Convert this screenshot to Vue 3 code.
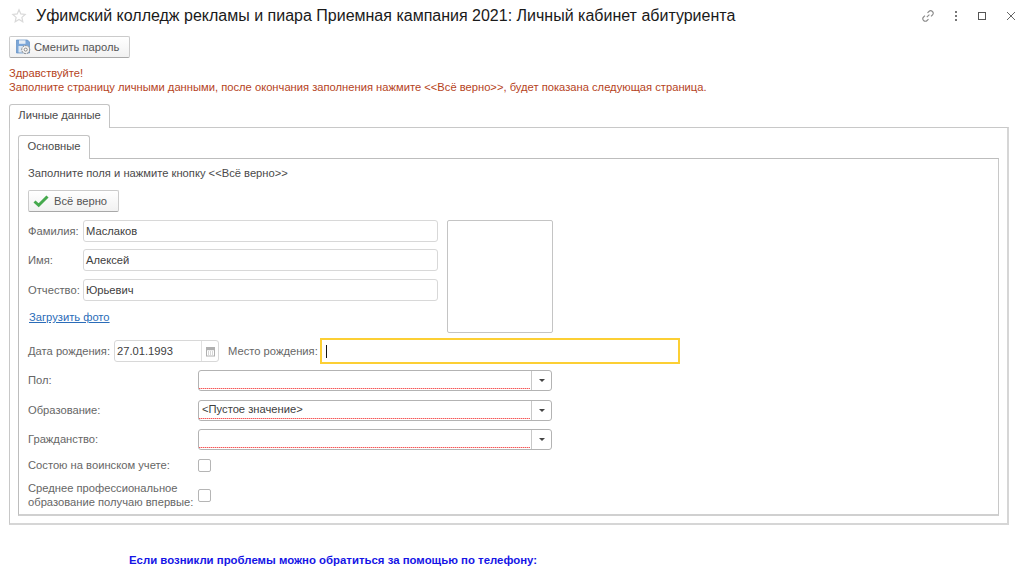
<script setup>
const selects = [
  { label: 'Пол:', value: '' },
  { label: 'Образование:', value: '<Пустое значение>' },
  { label: 'Гражданство:', value: '' }
]
const names = [
  { label: 'Фамилия:', value: 'Маслаков' },
  { label: 'Имя:', value: 'Алексей' },
  { label: 'Отчество:', value: 'Юрьевич' }
]
</script>

<template>
  <div class="page">
    <header class="head">
      <svg class="star" width="16" height="16" viewBox="0 0 16 16"><path d="M8 1.800l1.800 4.100 4.400.5-3.300 3 .9 4.400L8 11.500l-3.800 2.300.9-4.400-3.300-3 4.400-.5z" fill="#fff" stroke="#d9d9d9" stroke-width="1.200"/></svg>
      <h1 class="title">Уфимский колледж рекламы и пиара Приемная кампания 2021: Личный кабинет абитуриента</h1>
      <div class="wintools">
        <svg width="14" height="14" viewBox="0 0 14 14" fill="none" stroke="#8c8c8c" stroke-width="1.1"><path d="M5.800 8.200l2.600-2.600M6.500 3.900l1.400-1.400a2.400 2.400 0 0 1 3.500 3.500L10 7.400M7.500 10.100l-1.400 1.400a2.400 2.400 0 0 1-3.500-3.500L4 6.600"/></svg>
        <svg width="4" height="12" viewBox="0 0 4 12" fill="#777"><rect x="1" y="1" width="2" height="2"/><rect x="1" y="5" width="2" height="2"/><rect x="1" y="9" width="2" height="2"/></svg>
        <svg width="10" height="10" viewBox="0 0 10 10" fill="none" stroke="#555"><rect x="1.500" y="1.500" width="7" height="7"/></svg>
        <svg width="10" height="10" viewBox="0 0 10 10" fill="none" stroke="#666" stroke-width="1"><path d="M1 1l8 8M9 1l-8 8"/></svg>
      </div>
    </header>

    <button class="btn btn-pass">
      <svg width="16" height="16" viewBox="0 0 16 16"><path d="M.5 1h11l2 2v11H.5z" fill="#7ba6d8" stroke="#5f8cc2" stroke-width=".7"/><rect x="3" y="1.300" width="6.500" height="3.500" fill="#e4ecf5"/><rect x="2.500" y="7" width="6" height="6.500" fill="#dbe7f4"/><circle cx="9.700" cy="10.600" r="4" fill="#f2f2f2" stroke="#808080" stroke-dasharray="2 .9"/><circle cx="9.700" cy="10.600" r="1.500" fill="#fff" stroke="#808080" stroke-width=".9"/></svg>
      <span>Сменить пароль</span>
    </button>

    <div class="msg">Здравствуйте!<br>Заполните страницу личными данными, после окончания заполнения нажмите &lt;&lt;Всё верно&gt;&gt;, будет показана следующая страница.</div>

    <div class="tabbar"><div class="tab tab-outer">Личные данные</div></div>
    <section class="panel outer">
      <div class="tabbar"><div class="tab tab-inner">Основные</div></div>
      <div class="panel inner">
        <p class="hint">Заполните поля и нажмите кнопку &lt;&lt;Всё верно&gt;&gt;</p>
        <button class="btn btn-ok">
          <svg width="16" height="14" viewBox="0 0 16 14"><path d="M1.500 7.500l4.200 3.800L14.500 2.500" fill="none" stroke="#45a94d" stroke-width="3"/></svg>
          <span>Всё верно</span>
        </button>

        <div class="identity">
          <div class="names">
            <div v-for="n in names" :key="n.label" class="name-row">
              <label class="lbl name-lbl">{{ n.label }}</label>
              <div class="input name-input">{{ n.value }}</div>
            </div>
            <a class="link">Загрузить фото</a>
          </div>
          <div class="photo"></div>
        </div>

        <div class="birth">
          <label class="lbl">Дата рождения:</label>
          <div class="input date"><span class="date-val">27.01.1993</span><span class="cal">
            <svg width="11" height="11" viewBox="0 0 11 11" fill="none" stroke="#b0b0b0"><rect x="1.500" y="1.500" width="8" height="8.500"/><path d="M1.500 3h8" stroke-width="2.500"/><path d="M3 6h5M3 8h5" stroke-width="1" stroke-dasharray="1 1"/></svg>
          </span></div>
          <label class="lbl place-lbl">Место рождения:</label>
          <div class="focus"><i class="caret"></i></div>
        </div>

        <div class="sel-group">
          <div v-for="s in selects" :key="s.label" class="sel-row">
            <label class="lbl col-lbl raised">{{ s.label }}</label>
            <div class="select">
              <div class="sel-val">{{ s.value }}</div>
              <span class="drop"><i class="tri"></i></span>
            </div>
          </div>
        </div>

        <div class="check-row first">
          <label class="lbl col-lbl raised">Состою на воинском учете:</label>
          <span class="check"></span>
        </div>
        <div class="check-row second">
          <label class="lbl col-lbl two">Среднее профессиональное образование получаю впервые:</label>
          <span class="check"></span>
        </div>
      </div>
    </section>

    <p class="foot">Если возникли проблемы можно обратиться за помощью по телефону:</p>
  </div>
</template>

<style>
html, body { margin: 0; background: #fff; overflow: hidden; }
</style>

<style scoped>
.page {
  width: 1024px;
  height: 577px;
  overflow: hidden;
  box-sizing: border-box;
  padding: 0 15px 0 9px;
  font-family: "Liberation Sans", Arial, sans-serif;
  font-size: 11.2px;
  color: #4a4a4a;
  background: #fff;
}
.head {
  height: 36px;
  display: flex;
  align-items: center;
  margin-left: 2px;
  padding-bottom: 4px;
  box-sizing: border-box;
}
.star { flex: none; }
.title {
  margin: 0 0 0 9px;
  font-size: 16px;
  font-weight: 400;
  color: #1a1a1a;
  white-space: nowrap;
}
.wintools {
  margin-left: auto;
  margin-right: -7px;
  display: flex;
  align-items: center;
  gap: 19px;
}
.btn {
  display: flex;
  align-items: center;
  box-sizing: border-box;
  height: 22px;
  padding: 0;
  font: inherit;
  color: #555;
  background: linear-gradient(#fff, #f1f1f1);
  border: 1px solid #cbcbcb;
  border-bottom-color: #a8a8a8;
  border-radius: 2px;
}
.btn-pass { width: 121px; padding-left: 6px; gap: 2px; }
.btn-ok { width: 91px; padding-left: 4px; gap: 5px; }
.msg {
  margin-top: 8px;
  height: 28px;
  line-height: 14px;
  color: #b5431c;
  white-space: nowrap;
}
.tabbar { display: flex; height: 23px; position: relative; z-index: 1; }
.tab {
  box-sizing: border-box;
  height: 24px;
  padding-bottom: 4px;
  border: 1px solid #c4c4c4;
  border-bottom: 0;
  border-radius: 3px 3px 0 0;
  background: #fff;
  display: flex;
  align-items: center;
  justify-content: center;
}
.tab-outer { width: 101px; }
.tab-inner { width: 72px; }
.msg + .tabbar { margin-top: 10px; }
.panel {
  border: 1px solid #c4c4c4;
  box-sizing: border-box;
}
.outer {
  height: 398px;
  padding: 7px 8px 0;
  border-width: 1px 2px 2px 1px;
  border-color: #c8c8c8 #d6d6d6 #d6d6d6 #c8c8c8;
}
.inner {
  height: 358px;
  padding: 0 9px;
  border-width: 1px 1px 2px 1px;
  border-color: #bdbdbd #c8c8c8 #d0d0d0 #bdbdbd;
}
.hint { margin: 8px 0 0; line-height: 13px; }
.btn-ok { margin-top: 10px; }
.identity { display: flex; margin-top: 8px; }
.names { width: 410px; }
.name-row { display: flex; align-items: center; height: 22px; margin-bottom: 7px; }
.name-row:nth-child(2) { margin-bottom: 8px; }
.lbl { color: #666; white-space: nowrap; }
.name-lbl { width: 55px; flex: none; }
.raised { padding-bottom: 2px; }
.input {
  box-sizing: border-box;
  border: 1px solid #d8d8d8;
  border-radius: 3px;
  background: #fff;
  color: #404040;
}
.name-input {
  width: 355px;
  height: 22px;
  line-height: 20px;
  padding-left: 2px;
}
.link {
  display: inline-block;
  margin: 3px 0 0 1px;
  color: #2a6cb8;
  text-decoration: underline;
}
.photo {
  box-sizing: border-box;
  width: 106px;
  height: 113px;
  margin-left: 9px;
  border: 1px solid #c4c4c4;
  border-radius: 2px;
}
.birth {
  display: flex;
  align-items: center;
  height: 26px;
  margin-top: 5px;
}
.birth > .lbl:first-child { width: 86px; flex: none; }
.date { display: flex; width: 105px; height: 22px; align-items: center; }
.date-val { width: 86px; padding-left: 2px; box-sizing: border-box; }
.cal {
  flex: 1;
  height: 100%;
  border-left: 1px solid #e0e0e0;
  display: flex;
  align-items: center;
  justify-content: center;
}
.place-lbl { margin-left: 9px; width: 92px; flex: none; }
.focus {
  box-sizing: border-box;
  width: 360px;
  height: 26px;
  border: 2px solid #fccf34;
  background: #fff;
  display: flex;
  align-items: center;
  padding-left: 4px;
}
.caret { width: 1px; height: 13px; background: #111; display: block; }
.sel-group { margin-top: 6px; }
.sel-row { display: flex; align-items: center; height: 21px; margin-bottom: 9px; }
.sel-row:nth-child(2) { margin-bottom: 8px; }
.col-lbl { width: 170px; flex: none; }
.select {
  display: flex;
  box-sizing: border-box;
  width: 354px;
  height: 21px;
  border: 1px solid #b3b3b3;
  border-radius: 3px;
  background: #fff;
}
.sel-val {
  flex: 1;
  margin: 0 1px 1px 0;
  padding-left: 3px;
  line-height: 17px;
  height: 18px;
  color: #404040;
  background: repeating-linear-gradient(90deg, #f25a5a 0 1px, #ffb5b5 1px 2px) left bottom / 100% 1px no-repeat;
}
.drop {
  width: 19px;
  flex: none;
  border-left: 1px solid #c8c8c8;
  display: flex;
  align-items: center;
  justify-content: center;
}
.tri {
  display: block;
  width: 0;
  height: 0;
  border-left: 3px solid transparent;
  border-right: 3px solid transparent;
  border-top: 3px solid #444;
}
.check-row { display: flex; align-items: center; }
.first { height: 13px; margin-top: 9px; }
.second { height: 26px; margin-top: 10px; }
.two { white-space: normal; line-height: 14px; width: 170px; }
.check {
  box-sizing: border-box;
  width: 13px;
  height: 13px;
  border: 1px solid #b5b5b5;
  border-radius: 2px;
  background: #fff;
}
.foot {
  margin: 28px 0 0 120px;
  font-size: 11.4px;
  font-weight: 700;
  color: #1515e6;
  line-height: 14px;
}
</style>
